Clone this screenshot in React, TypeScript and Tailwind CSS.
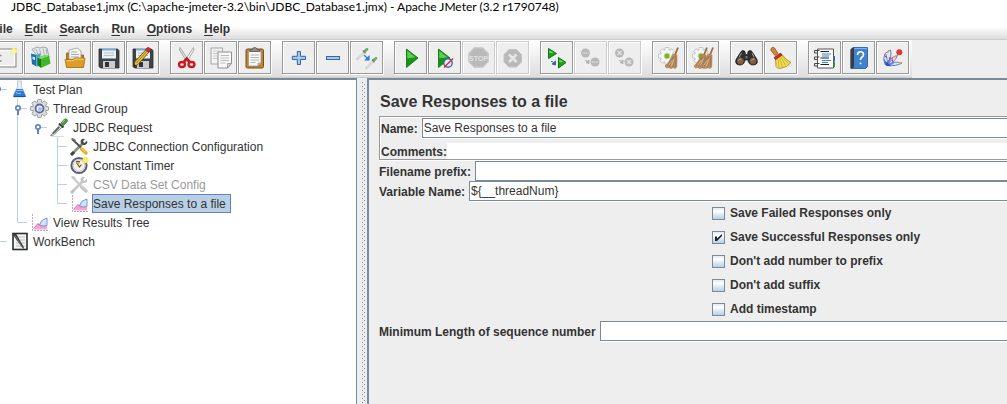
import { useId, type ReactNode } from 'react';

/* ---------- toolbar drawings, 33 x 33 grid ---------- */

const Floppy = () => (
  <>
    <path d="M7 8h18.500l1.500 1.500V27H8.500L7 25.500z" fill="#3f4246" stroke="#2b2d30" strokeWidth=".8" />
    <rect x="10" y="7.500" width="14" height="10" fill="#e9f1f8" />
    <path d="M10 8.500h14" stroke="#7aa7d6" strokeWidth="2" />
    <path d="M12 12h10M12 14.500h10" stroke="#b5c0ca" />
    <rect x="11" y="20" width="12" height="7" fill="#c9ccd0" />
    <rect x="13" y="21" width="4" height="5" fill="#2f3236" />
  </>
);

/* Cog body: four bars crossing under a disc give eight teeth */
const Cog = ({ size, fill, stroke }: { size: number; fill: string; stroke: string }) => (
  <>
    {[0, 45, 90, 135].map((a) => (
      <rect key={a} x="-2" y={-size} width="4" height={size * 2} rx=".8" transform={`rotate(${a})`} fill={fill} stroke={stroke} strokeWidth=".8" />
    ))}
    <circle r={size - 2} fill={fill} stroke={stroke} strokeWidth=".8" />
    {[0, 45, 90, 135].map((a) => (
      <rect key={a} x="-1.500" y={1 - size} width="3" height={size * 2 - 2} transform={`rotate(${a})`} fill={fill} />
    ))}
  </>
);

const Gear = ({ x }: { x: number }) => (
  <g transform={`translate(${x} 15)`}>
    <Cog size={8.5} fill="#f6f6f6" stroke="#b4b6b8" />
    <circle r="3" fill="#72b81d" stroke="#c9dcb0" />
  </g>
);

const Broom = ({ x }: { x: number }) => (
  <g transform={`translate(${x} 0)`}>
    <path d="M12 6.500 9 14" stroke="#9b6b3f" strokeWidth="1.800" />
    <path d="M6.500 13.500l4.500.5-.3 12-1.700 1.500-2-1-2 1-2.500-1-2 .5-1.500-2q5-4 7.500-11.500z" fill="#bf9465" stroke="#9b7046" strokeWidth=".6" />
    <path d="M8 15 3 26M9.500 15 6.500 26.500M10 17l-1 9M7 16 1 25" stroke="#8a6038" strokeWidth=".6" />
    <path d="M8.500 17.500 5.500 25M6.500 19 3 24" stroke="#e6c89e" strokeWidth=".7" />
  </g>
);

const Dropper = () => (
  <>
    <path d="M0 11.500 7 4.500 8 5.500 1.500 12z" fill="#f3f5f3" stroke="#b3bab3" strokeWidth=".8" />
    <path d="M6.500 3 9 5.800" stroke="#66805f" strokeWidth="1.300" />
    <path d="M7.500 3 10 1q1.800-.5 1.300 1.300L9 4.500z" fill="#74b063" stroke="#5b9450" strokeWidth=".8" />
  </>
);

const octagon = 'M12.500 7h8L26 12.500v8L20.500 26h-8L7 20.500v-8z';

const NewIcon = () => (
  <>
    <rect x="5" y="8" width="21" height="18" fill="#eceeec" stroke="#858885" />
    <rect x="6.500" y="9.500" width="18" height="15" fill="none" stroke="#fff" />
    <path d="M10 14.500h1.500M10 20h1.500" stroke="#888" strokeWidth="1.500" />
    <circle cx="24" cy="10" r="3" fill="#f7ee65" opacity=".85" />
    <path d="M24 7v6M21 10h6" stroke="#fffbb0" />
  </>
);
const TemplatesIcon = () => (
  <>
    <path d="M8 8.500 13 6l3 1 3-1 4 1 2 9-9 2z" fill="#e6e8e8" stroke="#8d9393" strokeWidth=".8" />
    <path d="M12 8l2 6M15.500 8l1.500 6M19 7.500l1.500 6M22 8l1 5" stroke="#9aa" strokeWidth=".8" />
    <path d="M7 12.500 12.500 14v11.500L8 23z" fill="#1c6fae" />
    <path d="m12.500 14 4-2v13l-4 .5z" fill="#3aa3e0" />
    <path d="M8.500 15.500 11 16.200v3L8.500 18z" fill="#d5e9f5" />
    <path d="m13.500 16.500 3.500 1.500v9l-3.500-3z" fill="#177a10" />
    <path d="m17 18 8-3.500 1.500 8L17 27z" fill="#3fb62b" />
    <path d="m13.500 16.500 7.500-3 4 1L17 18z" fill="#7bdc5c" />
  </>
);
const OpenIcon = () => (
  <>
    <path d="M8.500 12h6l1.500 2h9.500v12h-17z" fill="#b97d14" stroke="#8a5b0c" strokeWidth=".8" />
    <path d="M11 18V9l8-2 4 3v9z" fill="#f4f5f5" stroke="#989a9a" strokeWidth=".8" />
    <path d="M13 11h6M13 13.500h8M13 16h8" stroke="#a4a8a8" />
    <path d="M7 18.500h8l1.500-1.500H27L25.500 26.500h-17z" fill="#dd9c28" stroke="#a8710f" strokeWidth=".8" />
    <path d="M8.500 19.700h7L17 18.200h8.500" stroke="#f8d481" fill="none" />
  </>
);
const SaveAsIcon = () => (
  <>
    <Floppy />
    <path d="M9 20.500 20.500 8l3 2.500L12 23.500 7.500 26z" fill="#e9c13b" stroke="#4c3b10" strokeWidth=".8" />
    <path d="m10.500 22 11.500-13" stroke="#8c6d16" strokeWidth=".8" />
    <path d="m19.500 9 2-2.500q2-.5 3.500 2L23 11.500z" fill="#cc3027" stroke="#7a1a14" strokeWidth=".6" />
    <path d="m7.500 26 .8-3 2 1.800z" fill="#222" />
  </>
);
const CutIcon = () => (
  <>
    <path d="M10 6.500 19 20l-2 1L9.500 9z" fill="#dfe1e1" stroke="#8c9090" strokeWidth=".7" />
    <path d="M23.500 6.500 14.500 20l2 1L24 9z" fill="#f2f3f3" stroke="#8c9090" strokeWidth=".7" />
    <path d="m16 17 3.500 3.500M17.500 17 14 20.500" stroke="#c3161c" strokeWidth="2.500" />
    <ellipse cx="12" cy="23.500" rx="3" ry="2.500" fill="none" stroke="#d3151c" strokeWidth="2.300" />
    <ellipse cx="21.500" cy="23.500" rx="3" ry="2.500" fill="none" stroke="#d3151c" strokeWidth="2.300" />
  </>
);
const CopyIcon = () => (
  <>
    <path d="M7 7h11.500v16H7z" fill="#f3f3f3" stroke="#a2a4a2" />
    <path d="M9 10h7M9 12.500h7M9 15h5M9 17.500h5" stroke="#c6c8c6" />
    <path d="M14 11h13.500v11.500L23.500 27H14z" fill="#f8f8f8" stroke="#8d908d" />
    <path d="M16.500 14.500h8.500M16.500 17h8.500M16.500 19.500h8.500M16.500 22h5" stroke="#b8bab8" />
    <path d="M27.500 22.500h-4V27z" fill="#d3d5d3" stroke="#8d908d" strokeWidth=".8" />
  </>
);
const PasteIcon = () => (
  <>
    <rect x="8" y="8" width="17.500" height="19" rx="1.500" fill="#c08430" stroke="#7d4f10" />
    <path d="M10.500 10.500h12.500V22l-3 3h-9.500z" fill="#fafafa" stroke="#8e8e8e" strokeWidth=".7" />
    <path d="M12.500 14h8.500M12.500 16.500h8.500M12.500 19h8.500M12.500 21.500h5" stroke="#b0b2b0" />
    <path d="M23 22h-3v3z" fill="#ccc" stroke="#888" strokeWidth=".6" />
    <path d="M12 10.500V8.500h2.500q0-2 2.200-2t2.200 2h2.600v2z" fill="#8e908c" stroke="#555753" strokeWidth=".8" />
  </>
);
const PlusIcon = () => (
  <path d="M15.300 10.500h3.200V15.300h5v3.200h-5v5h-3.200v-5h-5v-3.200h5z" fill="#a9c8e8" stroke="#3465a4" />
);
const MinusIcon = () => <rect x="10.500" y="15.500" width="13" height="3" fill="#a9c8e8" stroke="#3465a4" />;
const ToggleIcon = () => (
  <>
    <g transform="translate(6.500 6.500)"><Dropper /></g>
    <g transform="translate(15.500 15.500)"><Dropper /></g>
    <path d="m14 14 4 4M19 15.500V19h-3.500z" stroke="#2f7bd9" strokeWidth="1.200" fill="#2f7bd9" />
  </>
);
const StartIcon = () => (
  <>
    <path d="M12.500 8 24 17 12.500 26.500z" fill="#149614" stroke="#0a6a0c" strokeWidth=".8" />
    <path d="M13.300 9.800 21.500 16.300q-4 1-8.200 1z" fill="#58cf50" />
  </>
);
const StartNoPauseIcon = () => (
  <>
    <path d="M10.500 8 22 17 10.500 26.500z" fill="#149614" stroke="#0a6a0c" strokeWidth=".8" />
    <path d="M11.300 9.800 19.500 16.300q-4 1-8.200 1z" fill="#58cf50" />
    <circle cx="20" cy="22" r="4.200" fill="#e4ebf8" stroke="#3768b4" strokeWidth="1.400" />
    <path d="M16 26.500 25 17.500" stroke="#e0262b" strokeWidth="1.500" />
  </>
);
const StopIcon = () => (
  <>
    <path d={octagon} fill="#b9b9b9" stroke="#c3c3c3" strokeWidth="1.500" />
    <text x="16.500" y="19.500" textAnchor="middle" fontSize="7" fontWeight="700" fill="#e2e2e2">STOP</text>
  </>
);
const ShutdownIcon = () => (
  <>
    <path d="M13 8.500h7.500L25.500 13.500V21L20.500 26H13L8 21v-7.500z" fill="#b9b9b9" stroke="#c3c3c3" />
    <path d="m13 13.500 7.500 7.500M20.500 13.500 13 21" stroke="#e6e6e6" strokeWidth="2.600" />
  </>
);
const RemoteStartIcon = () => (
  <>
    <path d="M8.500 7.500 16.500 12.500 8.500 17.500z" fill="#1c9e1c" stroke="#0b7a0e" />
    <path d="M18.500 16.500 26 21.500 18.500 27z" fill="#1c9e1c" stroke="#0b7a0e" />
    <path d="M9.300 9.200 14 12H9.300zM19.300 18.200 24 21.200H19.300z" fill="#6cda62" />
    <path d="M11 20.500q1.500-.5 2.500 1M15.500 20v4L12 23z" stroke="#3568b0" fill="#3568b0" />
  </>
);
const RemoteStopIcon = () => (
  <>
    <circle cx="11.500" cy="12" r="4.500" fill="#b8b8b8" />
    <circle cx="21" cy="21" r="4.500" fill="#b8b8b8" />
    <path d="M8.500 12h6M18 21h6" stroke="#dadada" strokeWidth="1.500" strokeDasharray="1.200 .6" />
    <path d="M11 19.500q1.500-.5 2.500 1M15 19v3.500L12 21.500z" stroke="#b0b0b0" fill="#b0b0b0" />
  </>
);
const RemoteShutdownIcon = () => (
  <>
    <circle cx="11.500" cy="12" r="4.500" fill="#b8b8b8" />
    <circle cx="21" cy="21" r="4.500" fill="#b8b8b8" />
    <path d="m9.500 10 4 4M13.500 10l-4 4M19 19l4 4M23 19l-4 4" stroke="#e2e2e2" strokeWidth="1.400" />
    <path d="M11 19.500q1.500-.5 2.500 1M15 19v3.500L12 21.500z" stroke="#b0b0b0" fill="#b0b0b0" />
  </>
);
const ClearIcon = () => (<><Gear x={15} /><Broom x={14} /></>);
const ClearAllIcon = () => (<><Gear x={15} /><Broom x={9} /><Broom x={15} /></>);
const SearchIcon = () => (
  <>
    <path d="M11 10.500q2-2 4 0l.5 3h2l.5-3q2-2 4 0l5 8q1.500 5-3.500 5.500-5 0-5.500-5h-3q-.5 5-5.500 5-5-.5-3.500-5.500z" fill="#2d2e2f" stroke="#131313" strokeWidth=".7" />
    <path d="M11.500 12 9 16.500M22 12l2 4" stroke="#8a8c8c" strokeWidth="1.200" />
    <circle cx="10.300" cy="20" r="3" fill="#9b5634" stroke="#63605e" />
    <circle cx="23" cy="20" r="3" fill="#9b5634" stroke="#63605e" />
    <path d="M8.500 19.500q1-2 3-1.500M21.500 19.500q1-2 3-1.500" stroke="#d69d78" fill="none" />
    <path d="M15.500 15h2v2.500h-2z" fill="#747676" />
  </>
);
const ResetSearchIcon = () => (
  <>
    <path d="M7 7.500q1.500-2 3.500-.5l3.500 5.500-3 2-4-5z" fill="#cf8b3b" stroke="#845016" strokeWidth=".8" />
    <path d="M11.500 17 17.500 13q5 6.500 9.500 8.500-3.500 5-11 6-3.500-.5-4-2z" fill="#efdc55" stroke="#a5860f" strokeWidth=".8" />
    <path d="m14 18 1 8M15.500 17l3 9M17 16l4.500 8.500M18 15l6 7.500" stroke="#c2a524" strokeWidth=".7" />
    <path d="m10 16.500 6.500-4.500 1.500 2.200-6.500 4.500z" fill="#cf2424" stroke="#8e1212" strokeWidth=".6" />
  </>
);
const FunctionIcon = () => (
  <>
    <path d="M9.500 8h16v19h-16z" fill="#fdfdfd" stroke="#555" />
    <path d="M25.500 15h1.500v5.500h-1.500z" fill="#2a6fd0" />
    <path d="M25.500 21h1.500v5h-1.500z" fill="#2f9e2c" />
    <path d="M12.500 10.500H21M12.500 17H21M12.500 23.500H21" stroke="#222" strokeWidth="1.200" />
    <path d="M14 13h9M14 15h7M14 19.500h9M14 21.500h6" stroke="#3c7cd6" />
    <path d="M11.500 9.500h-5v2.500h3M11.500 16h-5v2.500h3M11.500 22.500h-5V25h3" stroke="#444" fill="none" />
  </>
);
const HelpIcon = () => (
  <>
    <path d="M9 8.500 11 6.500h14.500v19l-2 2H9z" fill="#3f83cf" stroke="#28588f" strokeWidth=".8" />
    <path d="M8.500 8.500 11 6.500h1v19l-1 2H8.500z" fill="#3a3d42" />
    <path d="M12.500 7.500h12.500" stroke="#83b4e8" />
    <path d="M15.500 14q0-3.300 3-3.300t3 2.800q0 1.800-1.700 2.800-1.300.8-1.300 2.700M18.500 21.500v1.700" stroke="#fff" strokeWidth="1.600" fill="none" />
  </>
);
const UndoIcon = () => (
  <>
    <path d="M9 23.500Q6.500 17 9 12.500L14.500 9q1.500 5-2 14zM10 24q2-7 11.500-9.500Q19 21 11 24.500zM11 24.500q7-5 15-2.500-6 3.500-15 2.500z" fill="#dfe8fb" stroke="#4b6fd6" strokeWidth=".9" />
    <path d="m7.500 18 5 6.500M10 13l2 11M13 19l-2 5.500M17 17l-6 7.500M18 22.500l-7 2" stroke="#4b6fd6" strokeWidth=".8" />
    <path d="m8.500 20 1.500 4.500 5 .8-3-3z" fill="#2c51c4" />
    <path d="m11.500 12 1.500-3M20.500 14.500l-3 2M22.500 22l3-.5" stroke="#f2a33a" strokeWidth="1.600" />
    <path d="m9 15 2 1.500M13 16.500l1.500 2M16 18.500l1 2.500" stroke="#e0424a" strokeWidth="1.300" />
    <circle cx="23.300" cy="11.300" r="3" fill="#dc3a32" />
  </>
);

type Tool = { name: string; icon: ReactNode; off?: boolean };
const toolGroups: Tool[][] = [
  [
    { name: 'New', icon: <NewIcon /> },
    { name: 'Templates', icon: <TemplatesIcon /> },
    { name: 'Open', icon: <OpenIcon /> },
    { name: 'Save', icon: <Floppy /> },
    { name: 'Save as', icon: <SaveAsIcon /> },
  ],
  [
    { name: 'Cut', icon: <CutIcon /> },
    { name: 'Copy', icon: <CopyIcon /> },
    { name: 'Paste', icon: <PasteIcon /> },
  ],
  [
    { name: 'Expand all', icon: <PlusIcon /> },
    { name: 'Collapse all', icon: <MinusIcon /> },
    { name: 'Toggle', icon: <ToggleIcon /> },
  ],
  [
    { name: 'Start', icon: <StartIcon /> },
    { name: 'Start no pauses', icon: <StartNoPauseIcon /> },
    { name: 'Stop', icon: <StopIcon />, off: true },
    { name: 'Shutdown', icon: <ShutdownIcon />, off: true },
  ],
  [
    { name: 'Remote start all', icon: <RemoteStartIcon /> },
    { name: 'Remote stop all', icon: <RemoteStopIcon />, off: true },
    { name: 'Remote shutdown all', icon: <RemoteShutdownIcon />, off: true },
  ],
  [
    { name: 'Clear', icon: <ClearIcon /> },
    { name: 'Clear all', icon: <ClearAllIcon /> },
  ],
  [
    { name: 'Search', icon: <SearchIcon /> },
    { name: 'Reset search', icon: <ResetSearchIcon /> },
  ],
  [
    { name: 'Function helper', icon: <FunctionIcon /> },
    { name: 'Help', icon: <HelpIcon /> },
    { name: 'Undo', icon: <UndoIcon /> },
  ],
];

const menus = ['File', 'Edit', 'Search', 'Run', 'Options', 'Help'];

/* ---------- tree drawings, 20 x 19 grid ---------- */

const FlaskIcon = () => (
  <>
    <path d="M8.500 1h4v5.500l4 9q.5 1.500-1.500 1.500H6q-2 0-1.500-1.500L8.500 6.500z" fill="#e6eef6" stroke="#b4c0cc" strokeWidth=".8" />
    <path d="M7.500 9h6l3 6.500q.3 1.500-1.200 1.500H5.700q-1.500 0-1.200-1.500z" fill="#2c7bd6" />
    <path d="M7.500 10.500h6M7 12.500q3 2 5 .5" stroke="#9accf8" fill="none" />
    <path d="M4.500 16.500h12" stroke="#1c4f9c" />
  </>
);
const ThreadGroupIcon = () => (
  <g transform="translate(10.500 9.500)">
    <Cog size={9} fill="#dcdddf" stroke="#85878a" />
    <circle r="4" fill="#e8f0fb" stroke="#5d6b94" strokeWidth="1.800" />
    <circle cx=".5" cy=".5" r="2" fill="#9cc0f0" />
  </g>
);
const SamplerIcon = () => (
  <>
    <path d="M1.500 17.500 11 6.500l2.500 2.200L4.500 17z" fill="#e3e6e3" stroke="#777c77" strokeWidth=".9" />
    <path d="M4 15.500 10.500 9" stroke="#4d544d" strokeWidth="1.200" />
    <path d="M10 5.500 14.500 9.500" stroke="#30402f" strokeWidth="2" />
    <path d="m12 5 3.500-4q3-.8 3 2L14.500 7.500z" fill="#4e9a45" stroke="#35752e" strokeWidth=".8" />
    <path d="m13.500 4.500 2.500-3" stroke="#a4d69c" />
    <path d="M2 18.500h13" stroke="#ddd" />
  </>
);
const ToolsIcon = ({ off }: { off?: boolean }) => (
  <>
    <path d="M3 17 14 6" stroke={off ? '#c9c9c9' : '#8b8d8e'} strokeWidth="2.600" />
    <path d="M18 3.500 15.500 6 14 4.500 16 2q-4-.8-4.500 2.500l.5 2 1.500 1.500 2.500 0q3-1 2-4.500z" fill={off ? '#c4c4c4' : '#4b4d4e'} />
    <path d="m3 2 9 8.500" stroke={off ? '#c9c9c9' : '#505253'} strokeWidth="2" />
    <path d="m2.500 1.500 3 1 1 2" stroke={off ? '#c9c9c9' : '#777'} fill="none" strokeWidth="1.500" />
    <path d="m12.500 12 4.500 4" stroke={off ? '#c4c4c4' : '#e8ae1c'} strokeWidth="3.500" strokeLinecap="round" />
    <path d="m12.500 11.500 4 3.500" stroke={off ? '#d6d6d6' : '#fbd86a'} />
    <path d="m2 18 3-3" stroke={off ? '#c0c0c0' : '#3f4142'} strokeWidth="3" />
  </>
);
const TimerIcon = () => (
  <>
    <circle cx="10" cy="9.500" r="7.600" fill="#f4f2ea" stroke="#5b5c78" strokeWidth="2" />
    <circle cx="10" cy="9.500" r="5.800" fill="none" stroke="#c4c3c3" />
    <path d="M7 5.500h4M7.500 6.500 10.500 11 12.500 8.500" stroke="#6b5a21" strokeWidth="1.200" fill="none" />
    <path d="M7 6h4l-1 3z" fill="#d9b43c" />
    <circle cx="16.500" cy="4" r="3" fill="#f6e842" />
    <path d="M16.500 1v6M13.500 4h6" stroke="#fff7a0" strokeWidth=".8" />
  </>
);
const GraphIcon = () => (
  <>
    <path d="M3.500 1v16.500H19" stroke="#b8adb6" strokeDasharray="2 1" fill="none" />
    <path d="M4.500 16.500 9 10.500l3.500 2.500 5.500-1v4.500z" fill="#f6a5d8" />
    <path d="m4.500 15.500 4.500-5 3 3" stroke="#e560a6" fill="none" />
    <path d="M10.500 12q1.500-5.500 5-6L18 5v7.500l-4 .5z" fill="#d2e2f8" stroke="#6d91d2" strokeWidth=".9" />
  </>
);
const WorkBenchIcon = () => (
  <>
    <rect x="4" y="1.500" width="14" height="16" fill="#f3f4f4" stroke="#2c2c2c" strokeWidth="1.600" />
    <path d="M7 5h9M7 8h9M7 11h9M7 14h9" stroke="#b9c0c5" />
    <path d="M3 1.500h4l7.500 13L15 17l-2-1.500z" fill="#3a3a3a" />
    <path d="m6 3.500 7.500 12" stroke="#8b8b8b" strokeWidth=".8" />
  </>
);

/* Guide cells drawn left of a node: v = passing line, t = branch, e = last branch,
   k = open handle on a passing line, h = open handle that ends the line, . = blank */
function Guide({ kind }: { kind: string }) {
  return (
    <svg className="h-[19px] w-5 shrink-0" viewBox="0 0 20 19" fill="none" aria-hidden="true">
      {'vtk'.includes(kind) && <path d="M10.500 0v19" stroke="#b8cfe5" />}
      {kind === 'e' && <path d="M10.500 0v9.500" stroke="#b8cfe5" />}
      {'tekh'.includes(kind) && <path d="M10.500 9.500H20" stroke="#b8cfe5" />}
      {'kh'.includes(kind) && (
        <>
          <path d="M11 11v5" stroke="#6382bf" strokeWidth="2" />
          <circle cx="11" cy="9" r="2.200" fill="#fff" stroke="#6382bf" strokeWidth="1.700" />
        </>
      )}
    </svg>
  );
}

type Node = { label: string; guides: string; icon: ReactNode; off?: boolean; selected?: boolean };
const nodes: Node[] = [
  { label: 'Test Plan', guides: 'h', icon: <FlaskIcon /> },
  { label: 'Thread Group', guides: '.k', icon: <ThreadGroupIcon /> },
  { label: 'JDBC Request', guides: '.vh', icon: <SamplerIcon /> },
  { label: 'JDBC Connection Configuration', guides: '.v.t', icon: <ToolsIcon /> },
  { label: 'Constant Timer', guides: '.v.t', icon: <TimerIcon /> },
  { label: 'CSV Data Set Config', guides: '.v.t', icon: <ToolsIcon off />, off: true },
  { label: 'Save Responses to a file', guides: '.v.e', icon: <GraphIcon />, selected: true },
  { label: 'View Results Tree', guides: '.e', icon: <GraphIcon /> },
  { label: 'WorkBench', guides: 'e', icon: <WorkBenchIcon /> },
];

/* ---------- form ---------- */

function Field({ label, value = '' }: { label: string; value?: string }) {
  const id = useId();
  return (
    <div className="flex h-5 items-center gap-1">
      <label htmlFor={id} className="shrink-0 pt-px font-bold">{label}</label>
      <input
        id={id}
        defaultValue={value}
        className="h-5 min-w-0 flex-1 border border-r-0 border-[#7a8a99] bg-white pl-px shadow-[0_1px_0_#fff] outline-none"
      />
    </div>
  );
}

function Check({ label, checked }: { label: string; checked?: boolean }) {
  return (
    <label className="flex h-6 items-center gap-[5px] font-bold">
      <span className="grid">
        <input
          type="checkbox"
          defaultChecked={checked}
          className="peer col-start-1 row-start-1 size-[13px] appearance-none border border-[#7a8a99] bg-linear-to-b from-[#dfe9f3] via-white via-30% to-[#b8cfe5]"
        />
        <svg className="pointer-events-none invisible col-start-1 row-start-1 size-[13px] peer-checked:visible" viewBox="0 0 13 13" aria-hidden="true">
          <path d="M3 5.500h2v2L10 3v2L5 10H3z" fill="#222" />
        </svg>
      </span>
      {label}
    </label>
  );
}

export default function App() {
  const commentsId = useId();
  return (
    <div className="flex min-h-screen flex-col overflow-hidden bg-[#eeeeee] font-['Liberation_Sans',Arial,sans-serif] text-xs text-[#333333]">
      <header className="h-[18px] bg-white pl-[11px] font-[Lato,'Open_Sans',sans-serif] text-xs leading-[14px] whitespace-nowrap text-black">
        JDBC_Database1.jmx (C:\apache-jmeter-3.2\bin\JDBC_Database1.jmx) - Apache JMeter (3.2 r1790748)
      </header>

      <nav className="flex h-[21px] items-center gap-3 bg-linear-to-b from-white from-40% to-[#dddddd] font-bold">
        {menus.map((m) => (
          <button key={m} type="button" className="font-bold first:-ml-2">
            <span className="underline underline-offset-2">{m[0]}</span>
            {m.slice(1)}
          </button>
        ))}
      </nav>

      <div className="flex h-[39px] border-t border-[#cccccc]">
        <div role="toolbar" aria-label="Main" className="-ml-[10px] flex gap-[11px] border-b border-[#cccccc] bg-linear-to-b from-white to-[#dddddd] pt-px pr-[3px]">
          {toolGroups.map((group) => (
            <div key={group[0].name} className="flex gap-px">
              {group.map((t) => (
                <button
                  key={t.name}
                  type="button"
                  aria-label={t.name}
                  disabled={t.off}
                  className={`size-[33px] border bg-[#eeeeee] shadow-[inset_1px_1px_0_#fff,1px_1px_0_#fff] ${t.off ? 'border-[#cccccc]' : 'border-[#999999]'}`}
                >
                  <svg className="size-[31px]" viewBox="1 1 31 31" fill="none" aria-hidden="true">{t.icon}</svg>
                </button>
              ))}
            </div>
          ))}
        </div>
      </div>

      <div className="flex flex-1">
        <aside className="w-[357px] shrink-0 border-t-2 border-r border-[#7a8a99] bg-white">
          <ul role="tree" aria-label="Test plan" className="-ml-[13px]">
            {nodes.map((n) => (
              <li key={n.label} role="treeitem" aria-selected={!!n.selected} className="flex h-[19px] items-center">
                {n.guides.split('').map((g, i) => (
                  <Guide key={i} kind={g} />
                ))}
                <svg className="ml-0.5 h-[19px] w-5 shrink-0" viewBox="0 0 20 19" fill="none" aria-hidden="true">{n.icon}</svg>
                <span
                  className={`ml-[3px] flex h-[19px] items-center border pr-1 ${n.selected ? 'border-[#6382bf] bg-[#b8cfe5]' : 'border-transparent'} ${n.off ? 'text-[#999999]' : ''}`}
                >
                  {n.label}
                </span>
              </li>
            ))}
          </ul>
        </aside>

        <div className="w-[10px] shrink-0 pt-1 pl-[5px]">
          <div className="h-full w-[3px] bg-[conic-gradient(from_270deg_at_1px_1px,#7a8a99_90deg,transparent_0),conic-gradient(from_270deg_at_1px_1px,#7a8a99_90deg,transparent_0)] bg-[length:4px_4px] bg-[position:0_0,2px_2px]" />
        </div>

        <main className="min-w-0 flex-1 border-t-2 border-l-2 border-[#7a8a99] pt-[13px] pl-[10px]">
          <h1 className="h-[23px] pl-px text-base leading-[18px] font-bold">Save Responses to a file</h1>
          <section className="flex flex-col gap-[5px] border border-r-0 border-[#999999] pt-px pl-px shadow-[inset_1px_1px_0_#fff,0_1px_0_#fff]">
            <Field label="Name:" value="Save Responses to a file" />
            <div className="flex h-4 items-center">
              <label htmlFor={commentsId} className="pt-0.5 font-bold">Comments:</label>
              <input id={commentsId} className="h-4 min-w-0 flex-1 bg-white outline-none" />
            </div>
          </section>
          <div className="mt-px flex flex-col">
            <Field label="Filename prefix:" />
            <Field label="Variable Name:" value="${__threadNum}" />
          </div>
          <div className="flex flex-col pl-[333px]">
            <Check label="Save Failed Responses only" />
            <Check label="Save Successful Responses only" checked />
            <Check label="Don't add number to prefix" />
            <Check label="Don't add suffix" />
            <Check label="Add timestamp" />
          </div>
          <Field label="Minimum Length of sequence number" />
        </main>
      </div>
    </div>
  );
}
